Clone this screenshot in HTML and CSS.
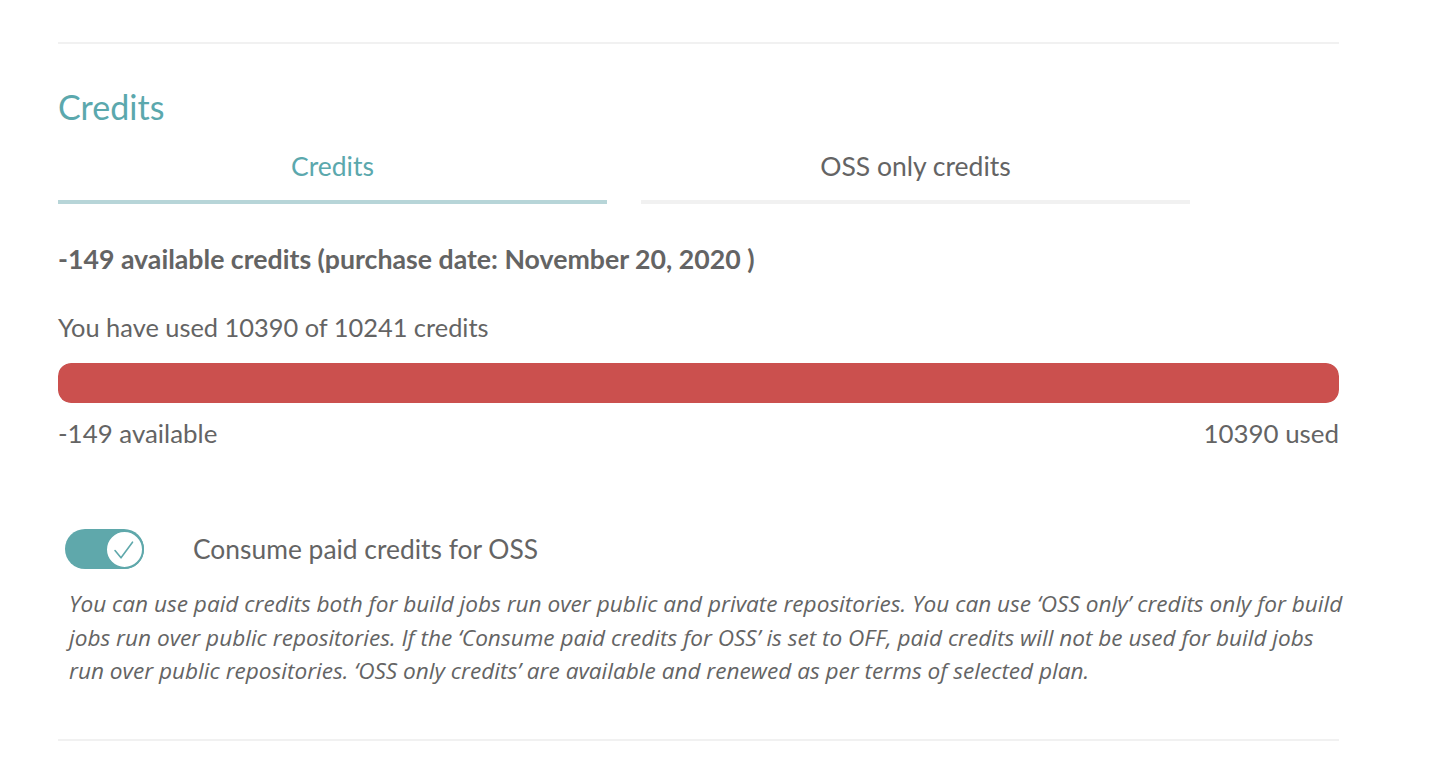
FILE: index.html
```html
<!DOCTYPE html>
<html lang="en">
<head>
<meta charset="utf-8">
<title>Credits</title>
<link rel="stylesheet" href="styles.css">
</head>
<body>
<main class="page">
  <div class="divider divider-top"></div>
  <h2 class="title">Credits</h2>
  <nav class="tabs">
    <div class="tab tab-active">Credits</div>
    <div class="tab">OSS only credits</div>
  </nav>
  <p class="summary">-149 available credits (purchase date: November 20, 2020 )</p>
  <p class="usage">You have used 10390 of 10241 credits</p>
  <div class="bar"><div class="bar-fill" style="width:100%"></div></div>
  <div class="bar-labels">
    <span>-149 available</span>
    <span>10390 used</span>
  </div>
  <div class="toggle-row">
    <div class="toggle">
      <svg class="knob" width="39" height="39" viewBox="0 0 39 39"><circle cx="19.5" cy="19.5" r="18.5" fill="#fff" stroke="#5fa8ab" stroke-width="2"/><path d="M10 20.5 L16 27.8 L27.5 12.2" fill="none" stroke="#5fa8ab" stroke-width="1.6" stroke-linecap="round" stroke-linejoin="round"/></svg>
    </div>
    <span class="toggle-label">Consume paid credits for OSS</span>
  </div>
  <p class="note">You can use paid credits both for build jobs run over public and private repositories. You can use ‘OSS only’ credits only for build<br>jobs run over public repositories. If the ‘Consume paid credits for OSS’ is set to OFF, paid credits will not be used for build jobs<br>run over public repositories. ‘OSS only credits’ are available and renewed as per terms of selected plan.</p>
  <div class="divider divider-bottom"></div>
</main>
</body>
</html>
```
FILE: styles.css
```css
* { box-sizing: border-box; }
html, body { margin: 0; background: #fff; }
body {
  font-family: "Lato", "Open Sans", sans-serif;
  color: #646464;
}
.page {
  width: 1281px;
  margin-left: 58px;
  display: flex;
  flex-direction: column;
}
.divider { height: 2px; background: #f1f1f1; }
.divider-top { margin-top: 42px; }
.title {
  margin: 43px 0 0;
  font-size: 34px;
  line-height: 40px;
  font-weight: 400;
  color: #5ba8ad;
}
.tabs {
  display: flex;
  gap: 34px;
}
.tab {
  width: 549px;
  text-align: center;
  font-size: 26.5px;
  line-height: 30px;
  padding: 24px 0 19px;
  border-bottom: 4px solid #f1f1f1;
  color: #646464;
}
.tab-active { color: #5ba8ad; border-bottom-color: #b7d5d8; }
.summary {
  margin: 40px 0 0;
  font-size: 26.7px;
  line-height: 30px;
  font-weight: 700;
}
.usage {
  margin: 38px 0 0;
  font-size: 25.4px;
  line-height: 30px;
}
.bar {
  margin-top: 21px;
  height: 40px;
  border-radius: 13px;
  background: #eee;
  overflow: hidden;
}
.bar-fill { height: 100%; background: #cb504e; border-radius: 13px; }
.bar-labels {
  display: flex;
  justify-content: space-between;
  font-size: 25.9px;
  line-height: 30px;
  margin-top: 15px;
}
.toggle-row {
  display: flex;
  align-items: center;
  margin-top: 81px;
  padding-left: 7px;
}
.toggle {
  width: 79px;
  height: 40px;
  border-radius: 20px;
  background: #5fa8ab;
  display: flex;
  justify-content: flex-end;
  align-items: center;
}
.knob { display: block; }
.toggle-label {
  margin-left: 49px;
  font-size: 26.4px;
  line-height: 30px;
}
.note {
  margin: 18px 0 0;
  padding-left: 11px;
  font-family: "Open Sans", "Lato", sans-serif;
  font-size: 22.6px;
  line-height: 33.5px;
  font-style: italic;
  white-space: nowrap;
}
.divider-bottom { margin-top: 51px; }
```
